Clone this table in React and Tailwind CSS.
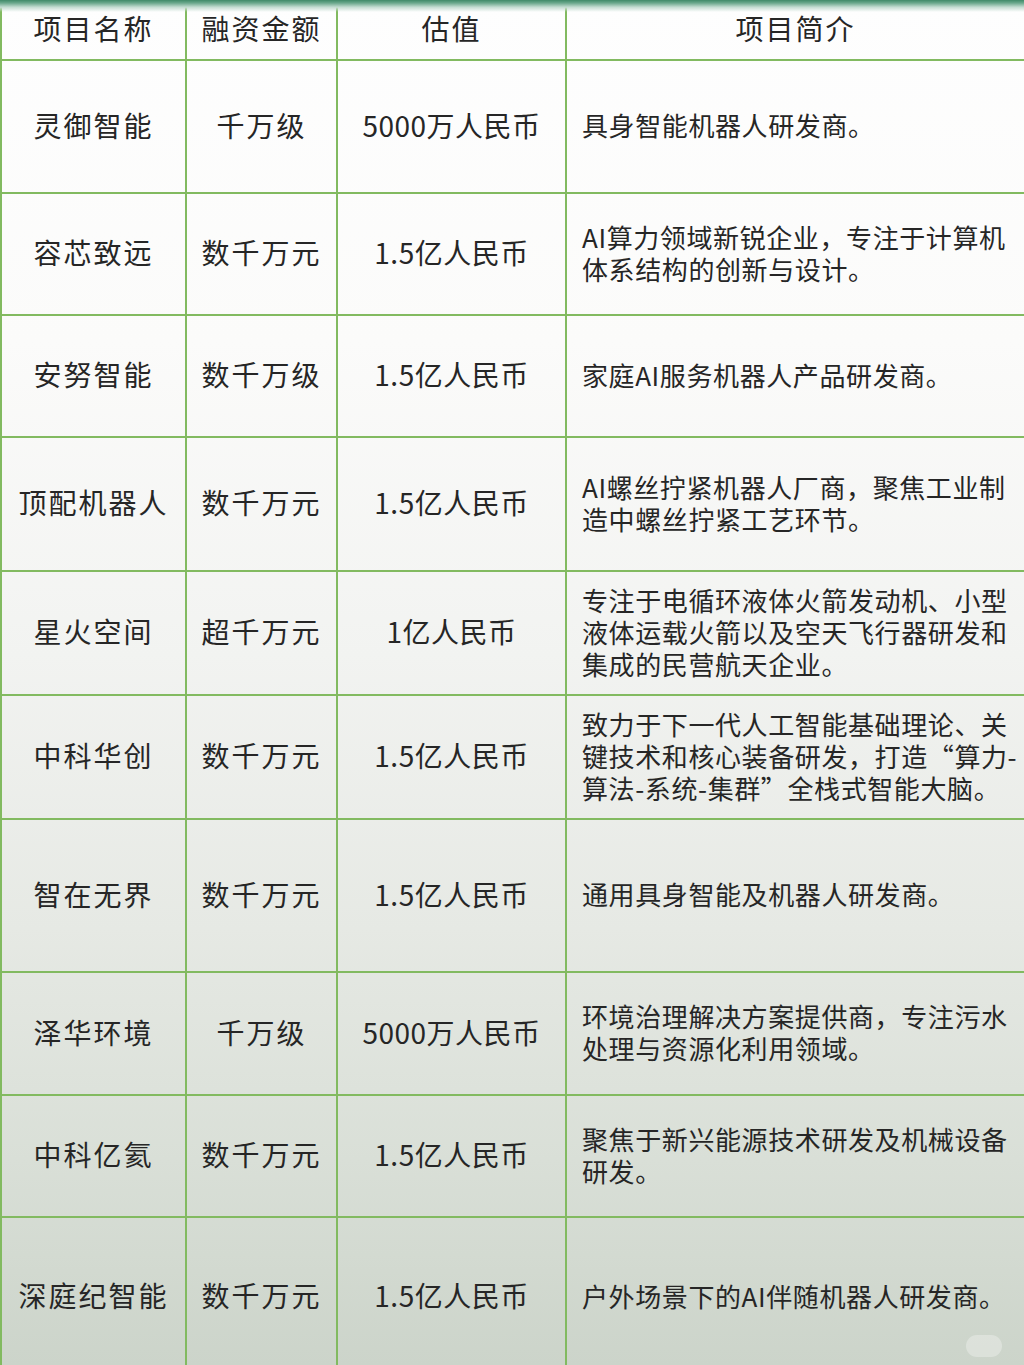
import React from "react";

const rows = [
  { h: "h-[133px]", name: "灵御智能", amount: "千万级", value: "5000万人民币", intro: ["具身智能机器人研发商。"] },
  { h: "h-[122px]", name: "容芯致远", amount: "数千万元", value: "1.5亿人民币", intro: ["AI算力领域新锐企业，专注于计算机", "体系结构的创新与设计。"] },
  { h: "h-[122px]", name: "安努智能", amount: "数千万级", value: "1.5亿人民币", intro: ["家庭AI服务机器人产品研发商。"] },
  { h: "h-[134px]", name: "顶配机器人", amount: "数千万元", value: "1.5亿人民币", intro: ["AI螺丝拧紧机器人厂商，聚焦工业制", "造中螺丝拧紧工艺环节。"] },
  { h: "h-[124px]", name: "星火空间", amount: "超千万元", value: "1亿人民币", intro: ["专注于电循环液体火箭发动机、小型", "液体运载火箭以及空天飞行器研发和", "集成的民营航天企业。"] },
  { h: "h-[124px]", name: "中科华创", amount: "数千万元", value: "1.5亿人民币", intro: ["致力于下一代人工智能基础理论、关", "键技术和核心装备研发，打造“算力-", "算法-系统-集群”全栈式智能大脑。"] },
  { h: "h-[153px]", name: "智在无界", amount: "数千万元", value: "1.5亿人民币", intro: ["通用具身智能及机器人研发商。"] },
  { h: "h-[123px]", name: "泽华环境", amount: "千万级", value: "5000万人民币", intro: ["环境治理解决方案提供商，专注污水", "处理与资源化利用领域。"] },
  { h: "h-[122px]", name: "中科亿氦", amount: "数千万元", value: "1.5亿人民币", intro: ["聚焦于新兴能源技术研发及机械设备", "研发。"] },
  { h: "h-[160px]", name: "深庭纪智能", amount: "数千万元", value: "1.5亿人民币", intro: ["户外场景下的AI伴随机器人研发商。"] },
];

// shared column widths
const c1 = "w-[187px] shrink-0 border-l-2 border-r-2 border-[#82ba60] flex items-center justify-center pb-[4px]";
const c2 = "w-[151px] shrink-0 border-r-2 border-[#82ba60] flex items-center justify-center pb-[4px]";
const c3 = "w-[229px] shrink-0 border-r-2 border-[#82ba60] flex items-center justify-center pb-[4px]";
const c4 = "flex-1 flex items-center pl-[15px] pr-2 pb-[3px]";

export default function App() {
  return (
    <div
      className="relative w-[1024px] h-[1365px] overflow-hidden text-[#262626] bg-[linear-gradient(to_bottom,#fefefe_0%,#fbfbfa_25%,#f2f3f1_48%,#e6e9e4_68%,#d9dfd7_85%,#ccd4ca_100%)]"
      style={{ fontFamily: '"Noto Sans CJK SC", "Noto Sans", sans-serif' }}
    >
      {/* top shadow line */}
      <div className="absolute top-0 left-0 right-0 h-[12px] bg-[linear-gradient(to_bottom,#3f8a68_0%,#6aa88c_25%,#c5ddd2_60%,transparent_100%)]" />

      <div className="flex h-[61px] border-b-2 border-[#82ba60] text-[28px] tracking-[2px]">
        <div className={c1}>项目名称</div>
        <div className={c2}>融资金额</div>
        <div className={c3}>估值</div>
        <div className="flex-1 flex items-center justify-center pb-[4px]">项目简介</div>
      </div>

      {rows.map((r, i) => (
        <div key={i} className={`flex ${r.h} border-b-2 border-[#82ba60]`}>
          <div className={`${c1} text-[28px] tracking-[2px]`}>{r.name}</div>
          <div className={`${c2} text-[28px] tracking-[2px]`}>{r.amount}</div>
          <div className={`${c3} text-[28px] tracking-[0.5px]`}>{r.value}</div>
          <div className={c4}>
            <div className="text-[26px] leading-[32px] tracking-[0.6px]">
              {r.intro.map((line, j) => (
                <div key={j} className="whitespace-nowrap">{line}</div>
              ))}
            </div>
          </div>
        </div>
      ))}

      {/* faint watermark */}
      <div className="absolute right-[22px] bottom-[8px] w-[36px] h-[22px] rounded-full bg-white/30" />
    </div>
  );
}
